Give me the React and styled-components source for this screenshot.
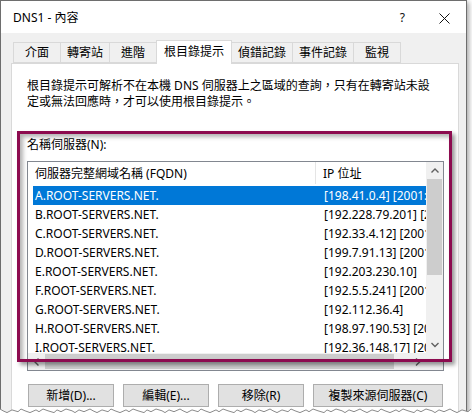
import styled, { createGlobalStyle } from "styled-components";

const GlobalStyle = createGlobalStyle`
  html, body {
    margin: 0;
    padding: 0;
    background: #fff;
  }
  body {
    font-family: "Noto Sans", "Noto Sans CJK TC", sans-serif;
    font-size: 12px;
    color: #000;
  }
`;

const Page = styled.div`
  position: relative;
  width: 472px;
  height: 415px;
  overflow: hidden;
`;

const Window = styled.div`
  width: 467px;
  height: 440px;
  box-sizing: border-box;
  border: 1px solid #6e6e6e;
  box-shadow: 2px 2px 5px rgba(0, 0, 0, 0.35);
  background: #f0f0f0;
  display: flex;
  flex-direction: column;
`;

const TitleBar = styled.div`
  height: 32px;
  flex: none;
  background: #fff;
  display: flex;
  align-items: center;
  padding: 2px 16px 0 12px;
  box-sizing: border-box;
  line-height: 16px;
`;

const TitleText = styled.span`
  flex: 1;
`;

const TitleButton = styled.span`
  display: flex;
  align-items: center;
  justify-content: center;
  margin-left: ${(p) => p.gap || 0}px;
  color: #111;
`;

const Body = styled.div`
  flex: 1;
  display: flex;
  flex-direction: column;
  padding: 9px 7px 0 10px;
`;

const TabStrip = styled.div`
  display: flex;
  align-items: flex-end;
  height: 21px;
  padding-left: 2px;
  position: relative;
  z-index: 1;
`;

const Tab = styled.div`
  box-sizing: border-box;
  min-width: 48px;
  height: ${(p) => (p.active ? 24 : 21)}px;
  margin-bottom: ${(p) => (p.active ? -1 : 0)}px;
  padding: ${(p) => (p.active ? "3px 7px 0" : "2px 6px 0")};
  margin-right: -1px;
  border: 1px solid #d9d9d9;
  border-bottom: ${(p) => (p.active ? "none" : "1px solid #d9d9d9")};
  background: ${(p) => (p.active ? "#fff" : "#f0f0f0")};
  text-align: center;
  line-height: 16px;
  white-space: nowrap;
  position: relative;
  z-index: ${(p) => (p.active ? 2 : 1)};
`;

const Panel = styled.div`
  flex: 1;
  position: relative;
  background: #fff;
  border: 1px solid #d9d9d9;
  padding: 14px 14px 0 15px;
`;

const Intro = styled.p`
  margin: 0;
  line-height: 16px;
`;

const FieldLabel = styled.div`
  margin-top: 27px;
  line-height: 16px;
`;

const ListBox = styled.div`
  margin-top: 8px;
  width: 417px;
  height: 210px;
  box-sizing: border-box;
  border: 1px solid #828790;
  display: grid;
  grid-template-columns: 1fr 17px;
  grid-template-rows: 1fr 17px;
`;

const Viewport = styled.div`
  overflow: hidden;
  position: relative;
`;

const Header = styled.div`
  display: flex;
  height: 22px;
  align-items: stretch;
`;

const HeaderCell = styled.div`
  box-sizing: border-box;
  width: ${(p) => (p.width ? p.width + "px" : "auto")};
  flex: ${(p) => (p.width ? "none" : 1)};
  padding-left: ${(p) => p.pad}px;
  display: flex;
  align-items: center;
  border-right: ${(p) => (p.divider ? "1px solid #e5e5e5" : "none")};
  white-space: nowrap;
`;

const Rows = styled.div`
  margin: 2px 0 0 5px;
`;

const Row = styled.div`
  display: flex;
  height: 19px;
  align-items: center;
  white-space: nowrap;
  background: ${(p) => (p.selected ? "#0078d7" : "transparent")};
  color: ${(p) => (p.selected ? "#fff" : "#000")};
`;

const NameCell = styled.div`
  box-sizing: border-box;
  width: 291px;
  flex: none;
  padding-left: 2px;
`;

const IpCell = styled.div`
  flex: none;
`;

const ScrollBar = styled.div`
  background: #f0f0f0;
  display: flex;
  flex-direction: ${(p) => (p.vertical ? "column" : "row")};
  align-items: stretch;
`;

const ScrollArrow = styled.div`
  flex: none;
  width: 17px;
  height: 17px;
  display: flex;
  align-items: center;
  justify-content: center;
`;

const Track = styled.div`
  flex: 1;
  display: flex;
  flex-direction: ${(p) => (p.vertical ? "column" : "row")};
  padding: ${(p) => (p.vertical ? "0 1px" : "1px 0")};
`;

const Thumb = styled.div`
  background: #cdcdcd;
  flex: none;
  ${(p) => (p.vertical ? `height: ${p.size}px;` : `width: ${p.size}px;`)}
`;

const Corner = styled.div`
  background: #f0f0f0;
`;

const ButtonRow = styled.div`
  display: flex;
  gap: 9px;
  margin-top: 13px;
  padding-left: 1px;
`;

const Button = styled.button`
  width: ${(p) => p.width}px;
  height: 23px;
  box-sizing: border-box;
  background: #e1e1e1;
  border: 1px solid #adadad;
  font-family: inherit;
  font-size: 12px;
  color: #000;
  padding: 0;
  line-height: 16px;
`;

const Highlight = styled.div`
  position: absolute;
  left: 5px;
  top: 67px;
  width: 435px;
  height: 231px;
  box-sizing: border-box;
  border: 3px solid #8c0b4f;
  box-shadow: 3px 3px 4px rgba(0, 0, 0, 0.4),
    inset 3px 3px 4px rgba(0, 0, 0, 0.3);
  pointer-events: none;
`;

const TornEdge = styled.svg`
  position: absolute;
  left: 0;
  bottom: 0;
  display: block;
`;

const tabs = ["介面", "轉寄站", "進階", "根目錄提示", "偵錯記錄", "事件記錄", "監視"];

const servers = [
  ["A.ROOT-SERVERS.NET.", "[198.41.0.4] [2001:503:ba3e::2:30]"],
  ["B.ROOT-SERVERS.NET.", "[192.228.79.201] [2001:500:84::b]"],
  ["C.ROOT-SERVERS.NET.", "[192.33.4.12] [2001:500:2::c]"],
  ["D.ROOT-SERVERS.NET.", "[199.7.91.13] [2001:500:2d::d]"],
  ["E.ROOT-SERVERS.NET.", "[192.203.230.10]"],
  ["F.ROOT-SERVERS.NET.", "[192.5.5.241] [2001:500:2f::f]"],
  ["G.ROOT-SERVERS.NET.", "[192.112.36.4]"],
  ["H.ROOT-SERVERS.NET.", "[198.97.190.53] [2001:500:1::53]"],
  ["I.ROOT-SERVERS.NET.", "[192.36.148.17] [2001:7fe::53]"],
];

function Chevron({ dir }) {
  const paths = {
    up: "M0.5 4.5 L4 1 L7.5 4.5",
    down: "M0.5 1 L4 4.5 L7.5 1",
    left: "M4.5 0.5 L1 4 L4.5 7.5",
    right: "M1 0.5 L4.5 4 L1 7.5",
  };
  const vertical = dir === "up" || dir === "down";
  return (
    <svg width={vertical ? 8 : 6} height={vertical ? 6 : 8}>
      <path d={paths[dir]} fill="none" stroke="#606060" strokeWidth="1.4" />
    </svg>
  );
}

function tornPath() {
  const pts = [];
  let x = 0;
  let i = 0;
  while (x <= 472) {
    const y = 2 + ((i * 37) % 5) * 0.9;
    pts.push(`${x},${y.toFixed(1)}`);
    x += 3 + ((i * 13) % 4);
    i++;
  }
  return pts;
}

export default function App() {
  const pts = tornPath();
  return (
    <Page>
      <GlobalStyle />
      <Window>
        <TitleBar>
          <TitleText>DNS1 - 內容</TitleText>
          <TitleButton>?</TitleButton>
          <TitleButton gap={34}>
            <svg width="11" height="11">
              <path d="M0.5 0.5 L10.5 10.5 M10.5 0.5 L0.5 10.5" stroke="#111" strokeWidth="1" />
            </svg>
          </TitleButton>
        </TitleBar>
        <Body>
          <TabStrip>
            {tabs.map((t) => (
              <Tab key={t} active={t === "根目錄提示"}>
                {t}
              </Tab>
            ))}
          </TabStrip>
          <Panel>
            <Intro>
              根目錄提示可解析不在本機 DNS 伺服器上之區域的查詢，只有在轉寄站未設
              <br />
              定或無法回應時，才可以使用根目錄提示。
            </Intro>
            <FieldLabel>名稱伺服器(N):</FieldLabel>
            <ListBox>
              <Viewport>
                <Header>
                  <HeaderCell width={288} pad={7} divider>
                    伺服器完整網域名稱 (FQDN)
                  </HeaderCell>
                  <HeaderCell pad={7}>IP 位址</HeaderCell>
                </Header>
                <Rows>
                  {servers.map(([name, ip], i) => (
                    <Row key={name} selected={i === 0}>
                      <NameCell>{name}</NameCell>
                      <IpCell>{ip}</IpCell>
                    </Row>
                  ))}
                </Rows>
              </Viewport>
              <ScrollBar vertical>
                <ScrollArrow>
                  <Chevron dir="up" />
                </ScrollArrow>
                <Track vertical>
                  <Thumb vertical size={96} />
                </Track>
                <ScrollArrow>
                  <Chevron dir="down" />
                </ScrollArrow>
              </ScrollBar>
              <ScrollBar>
                <ScrollArrow>
                  <Chevron dir="left" />
                </ScrollArrow>
                <Track>
                  <Thumb size={349} />
                </Track>
                <ScrollArrow>
                  <Chevron dir="right" />
                </ScrollArrow>
              </ScrollBar>
              <Corner />
            </ListBox>
            <ButtonRow>
              <Button width={86}>新增(D)...</Button>
              <Button width={86}>編輯(E)...</Button>
              <Button width={86}>移除(R)</Button>
              <Button width={130}>複製來源伺服器(C)</Button>
            </ButtonRow>
            <Highlight />
          </Panel>
        </Body>
      </Window>
      <TornEdge width="472" height="8" viewBox="0 0 472 8">
        <polygon points={`0,8 ${pts.join(" ")} 472,8`} fill="#fff" />
        <polyline points={pts.join(" ")} fill="none" stroke="#8a8a8a" strokeWidth="1" />
      </TornEdge>
    </Page>
  );
}
